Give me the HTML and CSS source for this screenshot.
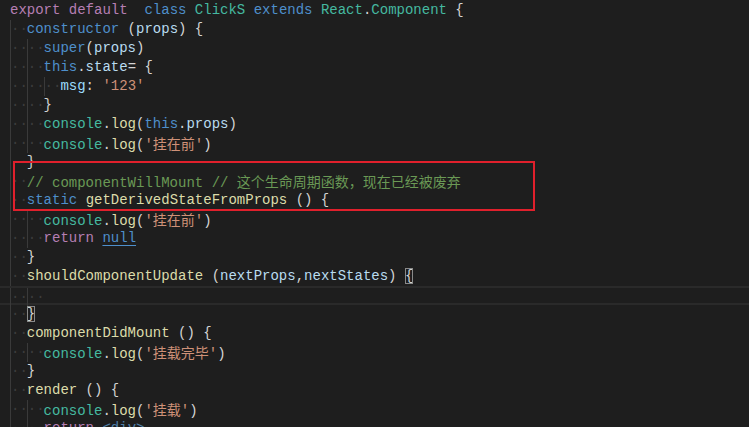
FILE: index.html
```html
<!DOCTYPE html>
<html lang="en">

<head>
    <meta charset="UTF-8">
    <title>ClickS.js</title>
    <link rel="stylesheet" href="styles.css">
</head>

<body>
    <div class="editor">
        <div class="code">
            <div class="ln"><span class="kw2">export default</span>  <span class="kw">class</span> <span class="cls">ClickS</span> <span class="kw">extends</span> <span class="cls">React</span>.<span class="cls">Component</span> {</div>
            <div class="ln"><span class="i">··</span><span class="kw">constructor</span> (<span class="var">props</span>) {</div>
            <div class="ln"><span class="i">··</span><span class="i">··</span><span class="kw">super</span>(<span class="var">props</span>)</div>
            <div class="ln"><span class="i">··</span><span class="i">··</span><span class="kw">this</span>.<span class="var">state</span>= {</div>
            <div class="ln"><span class="i">··</span><span class="i">··</span><span class="i">··</span><span class="prop">msg</span>: <span class="str">'123'</span></div>
            <div class="ln"><span class="i">··</span><span class="i">··</span>}</div>
            <div class="ln"><span class="i">··</span><span class="i">··</span><span class="cls">console</span>.<span class="fn">log</span>(<span class="kw">this</span>.<span class="var">props</span>)</div>
            <div class="ln"><span class="i">··</span><span class="i">··</span><span class="cls">console</span>.<span class="fn">log</span>(<span class="str">'<span class="cjk">挂在前</span>'</span>)</div>
            <div class="ln"><span class="i">··</span>}</div>
            <div class="ln"><span class="i">··</span><span class="cmt">// componentWillMount // <span class="cjk">这个生命周期函数，现在已经被废弃</span></span></div>
            <div class="ln"><span class="i">··</span><span class="kw">static</span> <span class="fn">getDerivedStateFromProps</span> () {</div>
            <div class="ln"><span class="i">··</span><span class="i">··</span><span class="cls">console</span>.<span class="fn">log</span>(<span class="str">'<span class="cjk">挂在前</span>'</span>)</div>
            <div class="ln"><span class="i">··</span><span class="i">··</span><span class="kw2">return</span> <span class="kw null">null</span></div>
            <div class="ln"><span class="i">··</span>}</div>
            <div class="ln"><span class="i">··</span><span class="fn">shouldComponentUpdate</span> (<span class="var">nextProps</span>,<span class="var">nextStates</span>) <span class="bm">{</span></div>
            <div class="ln current"><span class="i">··</span><span class="i">··</span></div>
            <div class="ln"><span class="i">··</span><span class="bm">}</span></div>
            <div class="ln"><span class="i">··</span><span class="fn">componentDidMount</span> () {</div>
            <div class="ln"><span class="i">··</span><span class="i">··</span><span class="cls">console</span>.<span class="fn">log</span>(<span class="str">'<span class="cjk">挂载完毕</span>'</span>)</div>
            <div class="ln"><span class="i">··</span>}</div>
            <div class="ln"><span class="i">··</span><span class="fn">render</span> () {</div>
            <div class="ln"><span class="i">··</span><span class="i">··</span><span class="cls">console</span>.<span class="fn">log</span>(<span class="str">'<span class="cjk">挂载</span>'</span>)</div>
            <div class="ln"><span class="i">··</span><span class="i">··</span><span class="kw2">return</span> <span class="tag">&lt;div&gt;</span></div>
        </div>
        <div class="mark"></div>
    </div>
</body>

</html>
```

FILE: styles.css
```css
body {
    margin: 0px;
    padding: 0px;
    background-color: #1e1e1e;
    overflow: hidden;
}

.editor {
    position: relative;
    width: 749px;
    height: 427px;
    overflow: hidden;
}

.code {
    display: flex;
    flex-direction: column;
    padding-left: 10px;
    padding-top: 1px;
    font-family: "Liberation Mono", "Noto Sans CJK SC", monospace;
    font-size: 14px;
    line-height: 19px;
    color: #d4d4d4;
}

.ln {
    height: 19px;
    white-space: pre;
}

/* 当前行 */
.current {
    box-sizing: border-box;
    margin-left: -10px;
    padding-left: 10px;
    border-top: 2px solid #2a2a2a;
    border-bottom: 2px solid #2a2a2a;
}

/* 缩进参考线 + 空白点 */
.i {
    display: inline-block;
    box-sizing: border-box;
    width: 2ch;
    border-left: 1px solid #3a3a3a;
    color: #3c3c3c;
    vertical-align: top;
}

.kw {
    color: #4e8fcb;
}

.kw2 {
    color: #b67fb3;
}

.cls {
    color: #45b9a0;
}

.fn {
    color: #dcdcaa;
}

.var {
    color: #b9dcf0;
}

.prop {
    color: #9cdcfe;
}

.str {
    color: #ce9178;
}

.cmt {
    color: #6a9955;
}

.tag {
    color: #4e7fa8;
}

.null {
    text-decoration: underline;
    text-underline-offset: 3px;
}

.cjk {
    font-family: "Noto Sans CJK SC", sans-serif;
    font-size: 14px;
}

.bm {
    outline: 1px solid #8a8a8a;
    outline-offset: -1px;
}

/* 红框标注 */
.mark {
    position: absolute;
    left: 13px;
    top: 161px;
    width: 518px;
    height: 46px;
    border: 2px solid #e0202c;
}
```
